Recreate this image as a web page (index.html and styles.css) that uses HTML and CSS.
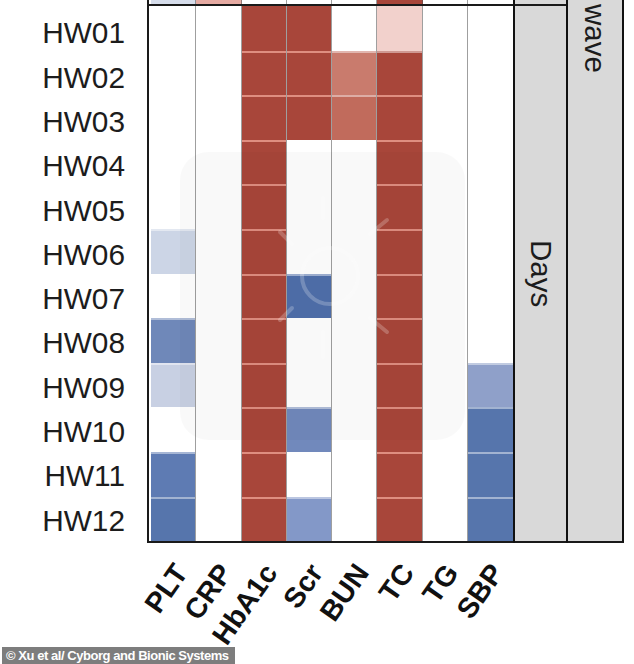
FILE: index.html
```html
<!DOCTYPE html>
<html>
<head>
<meta charset="utf-8">
<link rel="stylesheet" href="styles.css">
</head>
<body>
<div class="page">
  <div class="top">
    <div class="labels">
      <div class="lab">HW01</div><div class="lab">HW02</div><div class="lab">HW03</div>
      <div class="lab">HW04</div><div class="lab">HW05</div><div class="lab">HW06</div>
      <div class="lab">HW07</div><div class="lab">HW08</div><div class="lab">HW09</div>
      <div class="lab">HW10</div><div class="lab">HW11</div><div class="lab">HW12</div>
    </div>
    <div class="plot">
      <div class="area">
        <div class="tp">
          <div class="tc pb0"></div><div class="tc pr0"></div><div class="tc"></div><div class="tc"></div>
          <div class="tc"></div><div class="tc r"></div><div class="tc"></div><div class="tc last"></div>
        </div>
        <div class="main">
          <div class="col">
            <div class="c"></div><div class="c"></div><div class="c"></div><div class="c"></div><div class="c"></div>
            <div class="c b1"></div><div class="c"></div><div class="c b3"></div><div class="c b1b"></div>
            <div class="c"></div><div class="c b5"></div><div class="c b6"></div>
          </div>
          <div class="col">
            <div class="c"></div><div class="c"></div><div class="c"></div><div class="c"></div><div class="c"></div><div class="c"></div>
            <div class="c"></div><div class="c"></div><div class="c"></div><div class="c"></div><div class="c"></div><div class="c"></div>
          </div>
          <div class="col">
            <div class="c r"></div><div class="c r"></div><div class="c r"></div><div class="c r"></div><div class="c r"></div><div class="c r"></div>
            <div class="c r"></div><div class="c r"></div><div class="c r"></div><div class="c r"></div><div class="c r"></div><div class="c r"></div>
          </div>
          <div class="col">
            <div class="c r"></div><div class="c r"></div><div class="c r"></div><div class="c"></div><div class="c"></div><div class="c"></div>
            <div class="c b7"></div><div class="c"></div><div class="c"></div><div class="c b4"></div><div class="c"></div><div class="c b2"></div>
          </div>
          <div class="col">
            <div class="c"></div><div class="c r2"></div><div class="c r3"></div><div class="c"></div><div class="c"></div><div class="c"></div>
            <div class="c"></div><div class="c"></div><div class="c"></div><div class="c"></div><div class="c"></div><div class="c"></div>
          </div>
          <div class="col">
            <div class="c p1"></div><div class="c r"></div><div class="c r"></div><div class="c r"></div><div class="c r"></div><div class="c r"></div>
            <div class="c r"></div><div class="c r"></div><div class="c r"></div><div class="c r"></div><div class="c r"></div><div class="c r"></div>
          </div>
          <div class="col">
            <div class="c"></div><div class="c"></div><div class="c"></div><div class="c"></div><div class="c"></div><div class="c"></div>
            <div class="c"></div><div class="c"></div><div class="c"></div><div class="c"></div><div class="c"></div><div class="c"></div>
          </div>
          <div class="col last">
            <div class="c"></div><div class="c"></div><div class="c"></div><div class="c"></div><div class="c"></div><div class="c"></div>
            <div class="c"></div><div class="c"></div><div class="c b8"></div><div class="c b6"></div><div class="c b6"></div><div class="c b6"></div>
          </div>
        </div>
      </div>
      <div class="s1">
        <div class="s1tp"></div>
        <div class="s1main"><span class="vt">Days</span></div>
      </div>
      <div class="s2"><span class="vt wave">wave</span></div>
    </div>
  </div>
  <div class="xlabels">
    <div class="xl"><span>PLT</span></div>
    <div class="xl"><span>CRP</span></div>
    <div class="xl"><span>HbA1c</span></div>
    <div class="xl"><span>Scr</span></div>
    <div class="xl"><span>BUN</span></div>
    <div class="xl"><span>TC</span></div>
    <div class="xl"><span>TG</span></div>
    <div class="xl"><span>SBP</span></div>
  </div>
  <div class="watermark">
    <svg width="285" height="288" viewBox="0 0 285 288">
      <g fill="none" stroke="rgba(255,255,255,0.22)" stroke-width="4" stroke-linecap="round">
        <circle cx="150" cy="124" r="28"/>
        <line x1="143" y1="46" x2="143" y2="66"/>
        <line x1="143" y1="180" x2="143" y2="205"/>
        <line x1="190" y1="82" x2="207" y2="68"/>
        <line x1="190" y1="166" x2="207" y2="180"/>
        <line x1="100" y1="80" x2="112" y2="92"/>
        <line x1="100" y1="168" x2="112" y2="156"/>
      </g>
    </svg>
  </div>
  <div class="credit">© Xu et al/ Cyborg and Bionic Systems</div>
</div>
</body>
</html>
```
FILE: styles.css
```css
html, body {
  margin: 0;
  padding: 0;
  background: #ffffff;
}
body {
  width: 634px;
  height: 664px;
  overflow: hidden;
  font-family: "Liberation Sans", Arial, sans-serif;
  color: #1c1c1c;
}
.page {
  position: relative;
  width: 634px;
  height: 664px;
  overflow: hidden;
}
.top {
  display: flex;
}
.labels {
  width: 147px;
  box-sizing: border-box;
  padding-top: 11.4px;
  padding-right: 22px;
}
.lab {
  height: 44.3px;
  line-height: 44.3px;
  font-size: 29.8px;
  text-align: right;
}
.plot {
  display: flex;
  height: 543.2px;
}
.area {
  display: flex;
  flex-direction: column;
  border-left: 2px solid #1a1a1a;
  padding-left: 2px;
}
.tp {
  display: flex;
  height: 4px;
}
.tc {
  width: 45.25px;
  box-sizing: border-box;
  border-right: 1.5px solid rgba(80, 80, 80, 0.55);
}
.main {
  display: flex;
  margin-left: -4px;
  padding-left: 4px;
  border-top: 2px solid #1a1a1a;
  border-bottom: 2px solid #1a1a1a;
}
.col {
  width: 45.25px;
  box-sizing: border-box;
  border-right: 1.5px solid rgba(80, 80, 80, 0.55);
  display: flex;
  flex-direction: column;
}
.col.last, .tc.last {
  border-right: none;
}
.c {
  height: 44.6px;
  box-sizing: border-box;
  background: #ffffff;
}
.c + .c {
  border-top: 2px solid rgba(255, 255, 255, 0.45);
}
.r { background: #a8463a; }
.c.r + .c.r { border-top-color: #df8e80; }
.r2 { background: #c97b6d; }
.r3 { background: #c16b5c; }
.p1 { background: #f2d1cc; }
.pb0 { background: #d6ddeb; }
.pr0 { background: #e5aaa2; }
.b1 { background: #ccd5e6; }
.b1b { background: #c8d0e3; }
.b2 { background: #8398c8; }
.b3 { background: #6f88b9; }
.b4 { background: #7189bc; }
.b5 { background: #5e7bb3; }
.b6 { background: #5675ac; }
.b7 { background: #4f6fab; }
.b8 { background: #8fa0c9; }
.s1 {
  width: 55px;
  box-sizing: border-box;
  border-left: 2px solid #111;
  border-right: 2px solid #111;
  display: flex;
  flex-direction: column;
  background: #d9d9d9;
}
.s1tp {
  height: 4px;
}
.s1main {
  flex: 1;
  border-top: 2px solid #1a1a1a;
  border-bottom: 2px solid #1a1a1a;
  display: flex;
  align-items: center;
  justify-content: center;
}
.vt {
  writing-mode: vertical-rl;
  font-size: 29.5px;
  line-height: 32px;
  color: #1c1c1c;
}
.s2 {
  width: 56px;
  box-sizing: border-box;
  background: #d9d9d9;
  border-right: 2px solid #111;
  border-bottom: 2px solid #1a1a1a;
  overflow: hidden;
  display: flex;
  justify-content: center;
  align-items: flex-start;
}
.wave {
  margin-top: 4px;
}
.xlabels {
  display: flex;
  margin-left: 151px;
  margin-top: 10px;
}
.xl {
  width: 45.25px;
  box-sizing: border-box;
  padding-right: 16px;
  display: flex;
  justify-content: flex-end;
  height: 28px;
}
.xl span {
  display: block;
  white-space: nowrap;
  font-size: 28.5px;
  line-height: 28px;
  font-weight: bold;
  color: #111;
  transform-origin: 100% 50%;
  transform: rotate(-55deg);
}
.watermark {
  position: absolute;
  left: 180px;
  top: 152px;
  width: 285px;
  height: 288px;
  border-radius: 28px;
  background: rgba(0, 0, 0, 0.022);
}
.watermark svg {
  display: block;
}
.credit {
  position: absolute;
  left: 2px;
  bottom: 0;
  height: 17px;
  line-height: 17px;
  padding: 0 6px 0 4px;
  background: #7d7d7d;
  color: #ffffff;
  font-size: 13px;
  font-weight: bold;
  letter-spacing: -0.45px;
  white-space: nowrap;
}
```
